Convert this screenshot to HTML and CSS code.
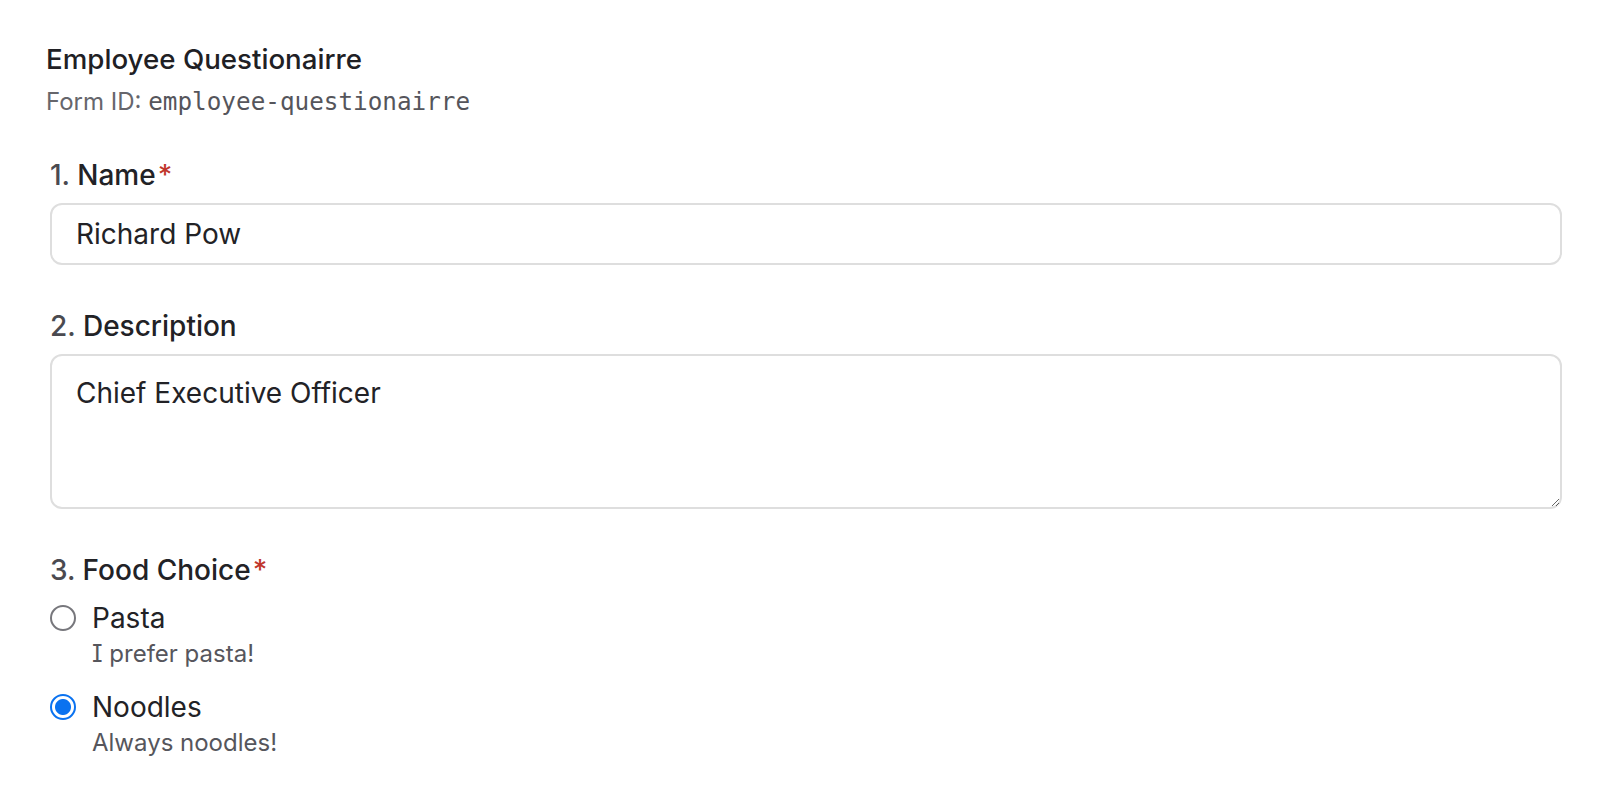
FILE: index.html
```html
<!DOCTYPE html>
<html lang="en">
<head>
<meta charset="utf-8">
<title>Employee Questionairre</title>
<link rel="stylesheet" href="styles.css">
</head>
<body>
<main class="page">
  <header class="form-head">
    <h1 class="form-title">Employee Questionairre</h1>
    <p class="form-id">Form ID: <code class="mono">employee-questionairre</code></p>
  </header>
  <form class="form">
    <div class="field">
      <label class="label" for="name"><span class="num">1.</span> Name<span class="req">*</span></label>
      <input class="input" id="name" type="text" value="Richard Pow">
    </div>
    <div class="field">
      <label class="label" for="desc"><span class="num">2.</span> Description</label>
      <textarea class="textarea" id="desc">Chief Executive Officer</textarea>
    </div>
    <div class="field">
      <div class="label"><span class="num">3.</span> Food Choice<span class="req">*</span></div>
      <div class="options">
        <label class="option">
          <input class="radio" type="radio" name="food">
          <span class="opt-text">
            <span class="opt-title">Pasta</span>
            <span class="opt-desc">I prefer pasta!</span>
          </span>
        </label>
        <label class="option">
          <input class="radio" type="radio" name="food" checked>
          <span class="opt-text">
            <span class="opt-title">Noodles</span>
            <span class="opt-desc">Always noodles!</span>
          </span>
        </label>
      </div>
    </div>
  </form>
</main>
</body>
</html>
```

FILE: styles.css
```css
* { box-sizing: border-box; }
html, body { margin: 0; padding: 0; background: #ffffff; }
body {
  font-family: Inter, "Noto Sans", "Liberation Sans", sans-serif;
  color: #222226;
}
.page {
  padding: 42px 52px 0 46px;
}
.form-title {
  margin: 0;
  font-size: 27.7px;
  line-height: 34px;
  font-weight: 500;
  color: #202024;
}
.form-id {
  margin: 10px 0 0;
  font-size: 24px;
  line-height: 32px;
  color: #66666c;
}
.mono {
  font-family: "DejaVu Sans Mono", "Liberation Mono", monospace;
  font-size: 24.3px;
  color: #55555b;
}
.form {
  margin-top: 39px;
  padding-left: 4px;
  display: flex;
  flex-direction: column;
  gap: 43px;
}
.field {
  display: flex;
  flex-direction: column;
  gap: 10px;
}
.label {
  font-size: 28px;
  line-height: 36px;
  font-weight: 500;
  color: #222226;
}
.num { color: #4a4a50; }
.req { color: #c0362c; margin-left: 2px; }
.input, .textarea {
  width: 100%;
  font-family: Inter, "Noto Sans", sans-serif;
  font-size: 28px;
  color: #222226;
  border: 2px solid #dedede;
  border-radius: 12px;
  background: #fff;
  outline: none;
}
.input {
  height: 62px;
  padding: 0 24px;
}
.textarea {
  height: 155px;
  padding: 19px 24px;
  line-height: 36px;
  resize: vertical;
  display: block;
}
.options {
  display: flex;
  flex-direction: column;
  gap: 20px;
  margin-top: 2px;
}
.option {
  display: flex;
  align-items: flex-start;
  gap: 16px;
}
.radio {
  appearance: none;
  -webkit-appearance: none;
  margin: 5px 0 0;
  width: 26px;
  height: 26px;
  border-radius: 50%;
  border: 2px solid #77777c;
  background: #fff;
  flex: none;
}
.radio:checked {
  border-color: #0a72f0;
  background: radial-gradient(circle, #0a72f0 0 7.5px, #fff 8.5px);
}
.opt-text {
  display: flex;
  flex-direction: column;
  gap: 3px;
}
.opt-title {
  font-size: 28px;
  line-height: 36px;
  color: #222226;
}
.opt-desc {
  font-size: 24px;
  line-height: 30px;
  color: #56565c;
  font-feature-settings: "cv08";
}
```
